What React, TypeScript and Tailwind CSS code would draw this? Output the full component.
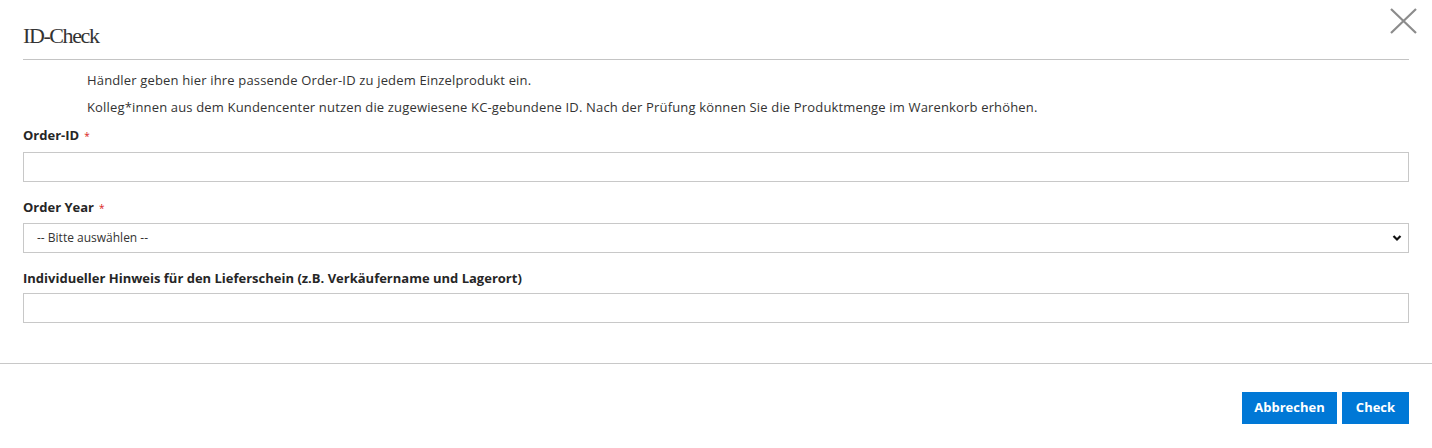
import React from "react";

const body = { fontFamily: "'Open Sans', 'Liberation Sans', sans-serif" };

function Label({ text, required }: { text: string; required?: boolean }) {
  return (
    <div className="h-[20px] leading-[20px] text-[13px] font-bold text-[#262626]">
      {text}
      {required && <span className="ml-[5px] text-[10px] text-[#d92121] font-normal">*</span>}
    </div>
  );
}

export default function App() {
  return (
    <div className="relative w-full h-[448px] bg-white" style={body}>
      <button className="absolute top-[8px] right-[15px] w-[27px] h-[26px] flex items-center justify-center">
        <svg width="27" height="26" viewBox="0 0 27 26" fill="none">
          <path d="M1 1 L26 25 M26 1 L1 25" stroke="#8c8c8c" strokeWidth="2.2" />
        </svg>
      </button>

      <div className="px-[23px]">
        <div className="h-[60px] pt-[23px] border-b border-[#c4c4c4]">
          <h1
            className="text-[22px] leading-[26px] tracking-[-1.4px] text-[#333333] font-normal"
            style={{ fontFamily: "'Liberation Serif', serif" }}
          >
            ID-Check
          </h1>
        </div>

        <div className="pl-[64px] pt-[10px] text-[13px] leading-[20px] tracking-[0.16px] text-[#333333]">
          <p className="mb-[7px]">Händler geben hier ihre passende Order-ID zu jedem Einzelprodukt ein.</p>
          <p>
            Kolleg*innen aus dem Kundencenter nutzen die zugewiesene KC-gebundene ID. Nach der Prüfung können Sie die
            Produktmenge im Warenkorb erhöhen.
          </p>
        </div>

        <div className="pt-[8px]">
          <Label text="Order-ID" required />
          <input className="mt-[7px] block w-full h-[30px] border border-[#c8c8c8] outline-none" />
        </div>

        <div className="pt-[15px]">
          <Label text="Order Year" required />
          <div className="relative mt-[6px] h-[30px] border border-[#c8c8c8] flex items-center">
            <span className="pl-[13px] text-[12px] text-[#333333]">-- Bitte auswählen --</span>
            <svg className="absolute right-[6px] top-[10px]" width="10" height="8" viewBox="0 0 10 8">
              <path d="M1.5 2 L5 5.5 L8.5 2" stroke="#111" strokeWidth="2.2" fill="none" />
            </svg>
          </div>
        </div>

        <div className="pt-[15px]">
          <Label text="Individueller Hinweis für den Lieferschein (z.B. Verkäufername und Lagerort)" />
          <input className="mt-[5px] block w-full h-[30px] border border-[#c8c8c8] outline-none" />
        </div>
      </div>

      <div className="mt-[40px] border-t border-[#c8c8c8] px-[23px] pt-[28px] flex justify-end gap-[5px]">
        <button className="h-[32px] w-[95px] bg-[#0078d6] text-white text-[13px] font-bold">Abbrechen</button>
        <button className="h-[32px] w-[67px] bg-[#0078d6] text-white text-[13px] font-bold">Check</button>
      </div>
    </div>
  );
}
